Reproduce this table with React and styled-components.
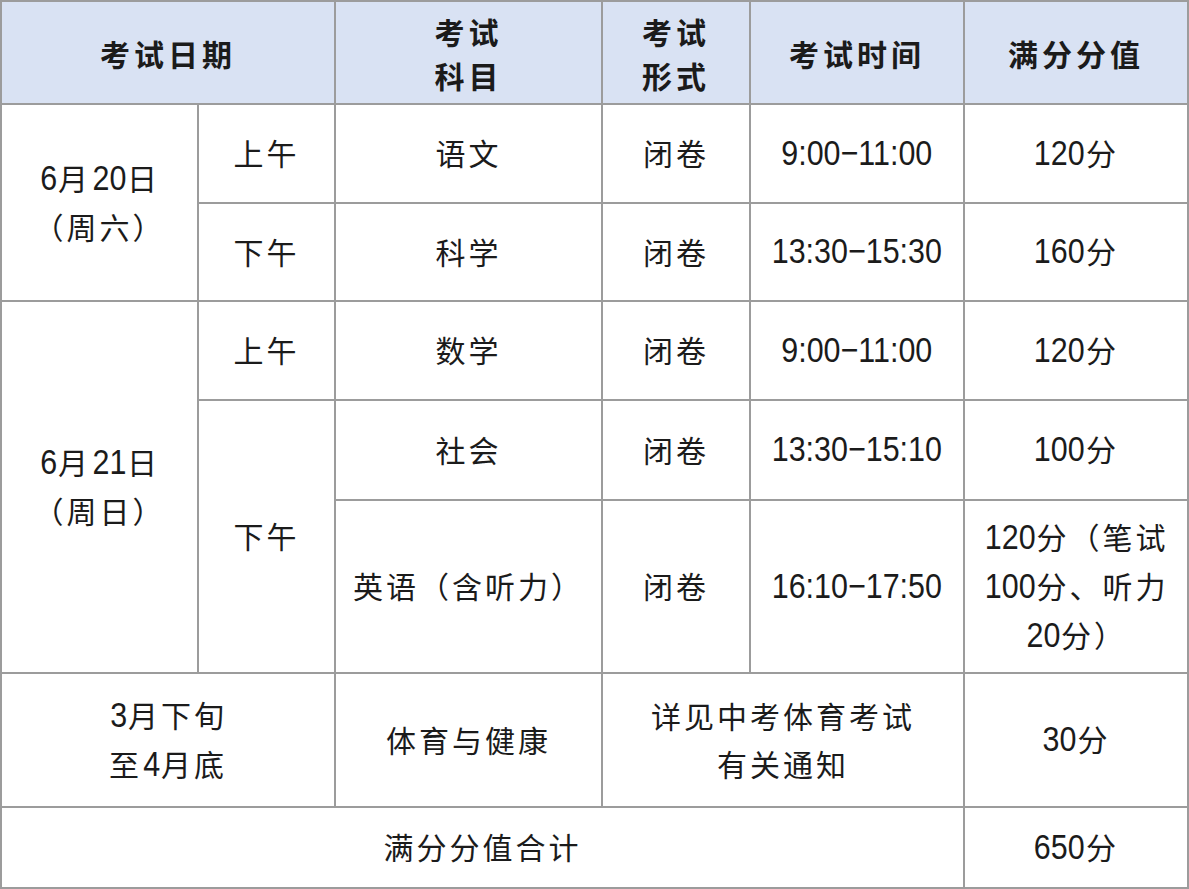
import React from 'react';
import styled, { createGlobalStyle } from 'styled-components';

const GlobalStyle = createGlobalStyle`
  html, body {
    margin: 0;
    padding: 0;
    background: #ffffff;
  }
`

const Table = styled.div`
  display: grid;
  width: 1189px;
  height: 889px;
  box-sizing: border-box;
  padding: 2px;
  gap: 2px;
  background: #9c9c9c;
  grid-template-columns: 195px 135px 265px 146px 212px 222px;
  grid-template-rows: 101px 97px 96px 97px 98px 171px 132px 79px;
  font-family: "Noto Sans CJK SC", "Noto Sans", sans-serif;
  color: #1b1b1b;
`

const Cell = styled.div`
  grid-column: ${p => p.$col || 'auto'};
  grid-row: ${p => p.$row || 'auto'};
  display: flex;
  align-items: center;
  justify-content: center;
  text-align: center;
  background: #ffffff;
  font-size: 30px;
  line-height: 48px;
  letter-spacing: 3px;
  font-weight: 400;
  padding-bottom: 3px;
`

const HeadCell = styled(Cell)`
  background: #d9e2f3;
  font-weight: 700;
  line-height: 44px;
  letter-spacing: 4px;
  padding-bottom: 0;
`

// arial-narrow look: regular latin face squeezed horizontally
const SQUEEZE = 0.87;
const NUM_SIZE = 35;

const Num = styled.span`
  display: inline-block;
  font-family: "Liberation Sans", Arial, sans-serif;
  font-size: ${NUM_SIZE}px;
  letter-spacing: 0;
  transform: scaleX(${SQUEEZE});
  transform-origin: center;
`

const charWidth = ch => (ch === ':' ? 0.278 : ch === '\u2212' ? 0.584 : 0.556);

// wrap digit runs so they get the narrow latin face
const Txt = ({ children }) => (
  <span>
    {children.split(/([0-9:\u2212]+)/).map((part, i) => {
      if (!/^[0-9:\u2212]+$/.test(part)) return part;
      const w = [...part].reduce((s, c) => s + charWidth(c), 0) * NUM_SIZE;
      const m = -(w * (1 - SQUEEZE)) / 2;
      return <Num key={i} style={{ margin: `0 ${m + 1}px` }}>{part}</Num>;
    })}
  </span>
)

const Lines = ({ items }) => (
  <div>
    {items.map((t, i) => (
      <div key={i}><Txt>{t}</Txt></div>
    ))}
  </div>
)

export default function App() {
  return (
    <>
      <GlobalStyle />
      <Table>
        <HeadCell $col="1 / 3">考试日期</HeadCell>
        <HeadCell><Lines items={['考试', '科目']} /></HeadCell>
        <HeadCell><Lines items={['考试', '形式']} /></HeadCell>
        <HeadCell>考试时间</HeadCell>
        <HeadCell>满分分值</HeadCell>

        <Cell $col="1" $row="2 / 4"><Lines items={['6月20日', '（周六）']} /></Cell>
        <Cell $col="2" $row="2">上午</Cell>
        <Cell $row="2">语文</Cell>
        <Cell $row="2">闭卷</Cell>
        <Cell $row="2"><Txt>9:00−11:00</Txt></Cell>
        <Cell $row="2"><Txt>120分</Txt></Cell>

        <Cell $col="2" $row="3">下午</Cell>
        <Cell $row="3">科学</Cell>
        <Cell $row="3">闭卷</Cell>
        <Cell $row="3"><Txt>13:30−15:30</Txt></Cell>
        <Cell $row="3"><Txt>160分</Txt></Cell>

        <Cell $col="1" $row="4 / 7"><Lines items={['6月21日', '（周日）']} /></Cell>
        <Cell $col="2" $row="4">上午</Cell>
        <Cell $row="4">数学</Cell>
        <Cell $row="4">闭卷</Cell>
        <Cell $row="4"><Txt>9:00−11:00</Txt></Cell>
        <Cell $row="4"><Txt>120分</Txt></Cell>

        <Cell $col="2" $row="5 / 7">下午</Cell>
        <Cell $col="3" $row="5">社会</Cell>
        <Cell $row="5">闭卷</Cell>
        <Cell $row="5"><Txt>13:30−15:10</Txt></Cell>
        <Cell $row="5"><Txt>100分</Txt></Cell>

        <Cell $col="3" $row="6">英语（含听力）</Cell>
        <Cell $row="6">闭卷</Cell>
        <Cell $row="6"><Txt>16:10−17:50</Txt></Cell>
        <Cell $row="6"><Lines items={['120分（笔试', '100分、听力', '20分）']} /></Cell>

        <Cell $col="1 / 3" $row="7"><Lines items={['3月下旬', '至4月底']} /></Cell>
        <Cell $row="7">体育与健康</Cell>
        <Cell $col="4 / 6" $row="7"><Lines items={['详见中考体育考试', '有关通知']} /></Cell>
        <Cell $row="7"><Txt>30分</Txt></Cell>

        <Cell $col="1 / 6" $row="8">满分分值合计</Cell>
        <Cell $row="8"><Txt>650分</Txt></Cell>
      </Table>
    </>
  );
}
